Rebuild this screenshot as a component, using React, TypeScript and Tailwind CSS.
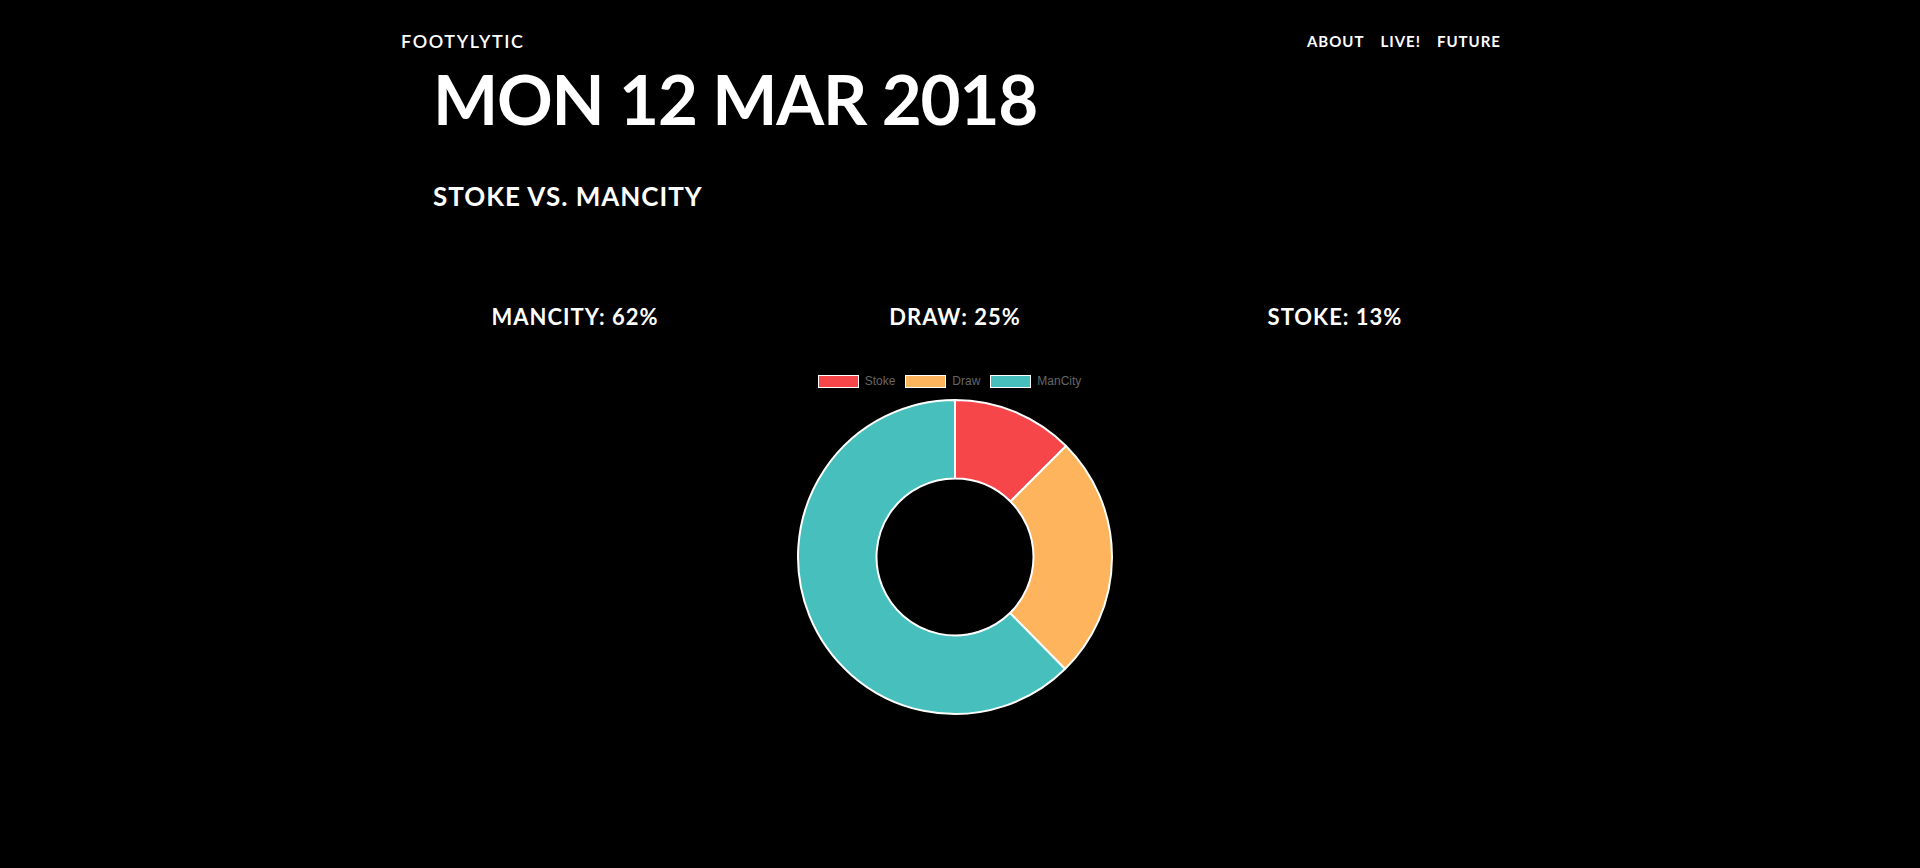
import React from "react";

const CX = 165;
const CY = 165;
const R = 157;
const r = 78.5;

function pt(rad: number, deg: number) {
  const a = (deg * Math.PI) / 180;
  return [CX + rad * Math.sin(a), CY - rad * Math.cos(a)];
}

function seg(a0: number, a1: number) {
  const large = a1 - a0 > 180 ? 1 : 0;
  const [x0, y0] = pt(R, a0);
  const [x1, y1] = pt(R, a1);
  const [x2, y2] = pt(r, a1);
  const [x3, y3] = pt(r, a0);
  return `M${x0} ${y0} A${R} ${R} 0 ${large} 1 ${x1} ${y1} L${x2} ${y2} A${r} ${r} 0 ${large} 0 ${x3} ${y3} Z`;
}

const segments = [
  { color: "#F7464A", a0: 0, a1: 45 },
  { color: "#FDB45C", a0: 45, a1: 135.5 },
  { color: "#46BFBD", a0: 135.5, a1: 360 },
];

const legend = [
  { label: "Stoke", color: "bg-[#F7464A]" },
  { label: "Draw", color: "bg-[#FDB45C]" },
  { label: "ManCity", color: "bg-[#46BFBD]" },
];

export default function App() {
  return (
    <div className="min-h-[868px] bg-black text-white font-['Lato',sans-serif]">
      <nav className="mx-auto flex w-[1170px] items-center justify-between pl-[26px] pr-[44px] pt-[29px]">
        <a className="text-[18px] font-semibold leading-[24px] tracking-[1.6px]">FOOTYLYTIC</a>
        <ul className="flex gap-[16px] text-[15px] font-bold leading-[24px] tracking-[1px]">
          <li>ABOUT</li>
          <li>LIVE!</li>
          <li>FUTURE</li>
        </ul>
      </nav>
      <main className="mx-auto w-[1150px] pr-[10px]">
        <h1 className="pl-[48px] pt-[6px] text-[69px] font-bold leading-[80px] tracking-[-1.2px]">
          MON 12 MAR 2018
        </h1>
        <h2 className="mt-[42px] pl-[48px] text-[26px] font-bold leading-[30px] tracking-[1px]">
          STOKE VS. MANCITY
        </h2>
        <div className="mt-[93px] grid grid-cols-3 text-center text-[22px] font-bold leading-[26px] tracking-[1px]">
          <div>MANCITY: 62%</div>
          <div>DRAW: 25%</div>
          <div>STOKE: 13%</div>
        </div>
        <div className="mt-[44px] flex justify-center pr-[11px] font-['Liberation_Sans',Arial,sans-serif] text-[12px] leading-[14px] text-[#666]">
          {legend.map((l) => (
            <div key={l.label} className="mr-[10px] flex items-center last:mr-0">
              <span className={`mr-[6px] h-[13px] w-[41px] border border-white ${l.color}`} />
              <span>{l.label}</span>
            </div>
          ))}
        </div>
        <div className="mt-[4px] flex justify-center">
          <svg width="330" height="330" viewBox="0 0 330 330">
            {segments.map((s) => (
              <path key={s.color} d={seg(s.a0, s.a1)} fill={s.color} stroke="#fff" strokeWidth="2" strokeLinejoin="bevel" />
            ))}
          </svg>
        </div>
      </main>
    </div>
  );
}
